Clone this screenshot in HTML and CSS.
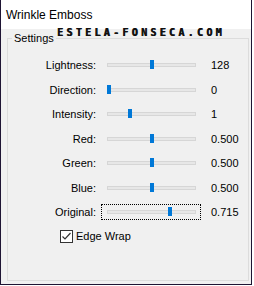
FILE: index.html
```html
<!DOCTYPE html>
<html>

<head>
    <meta charset="UTF-8">
    <title>Wrinkle Emboss</title>
    <link rel="stylesheet" href="styles.css">
</head>

<body>
    <div class="window">
        <div class="titlebar">Wrinkle Emboss</div>

        <div class="watermark">ESTELA-FONSECA.COM</div>

        <div class="group">
            <span class="legend">Settings</span>

            <div class="rows">
                <label>Lightness:</label>
                <div class="slider"><div class="track"><span class="thumb" style="--v:0.502"></span></div></div>
                <span class="value">128</span>

                <label>Direction:</label>
                <div class="slider"><div class="track"><span class="thumb" style="--v:0"></span></div></div>
                <span class="value">0</span>

                <label>Intensity:</label>
                <div class="slider"><div class="track"><span class="thumb" style="--v:0.25"></span></div></div>
                <span class="value">1</span>

                <label>Red:</label>
                <div class="slider"><div class="track"><span class="thumb" style="--v:0.5"></span></div></div>
                <span class="value">0.500</span>

                <label>Green:</label>
                <div class="slider"><div class="track"><span class="thumb" style="--v:0.5"></span></div></div>
                <span class="value">0.500</span>

                <label>Blue:</label>
                <div class="slider"><div class="track"><span class="thumb" style="--v:0.5"></span></div></div>
                <span class="value">0.500</span>

                <label>Original:</label>
                <div class="slider focused"><div class="track"><span class="thumb" style="--v:0.715"></span></div></div>
                <span class="value">0.715</span>
            </div>

            <div class="check">
                <span class="box">
                    <svg width="11" height="11" viewBox="0 0 11 11">
                        <polyline points="1.5,5.5 4,8 9.5,2" fill="none" stroke="#333" stroke-width="1.2"/>
                    </svg>
                </span>
                <span>Edge Wrap</span>
            </div>
        </div>
    </div>
</body>

</html>
```

FILE: styles.css
```css
* {
    box-sizing: border-box;
    margin: 0;
    padding: 0;
}

body {
    width: 254px;
    height: 286px;
    background-color: #fff;
    font-family: "Liberation Sans", Arial, sans-serif;
    font-size: 11px;
    color: #000;
}

.window {
    position: relative;
    width: 252px;
    height: 285px;
    display: flex;
    flex-direction: column;
    background-color: #f0f0f0;
    border: 1px solid #1e1433;
    border-top: none;
}

.titlebar {
    height: 29px;
    flex-shrink: 0;
    background-color: #fff;
    padding-left: 5px;
    font-size: 12px;
    line-height: 30px;
}

.watermark {
    position: absolute;
    left: 56px;
    top: 28px;
    font-family: "DejaVu Sans Mono", monospace;
    font-weight: bold;
    font-size: 10px;
    line-height: 10px;
    letter-spacing: 3.3px;
    color: #111;
    text-shadow: 0.6px 0 0 #111;
}

.group {
    position: relative;
    flex: 1;
    margin: 9px 2px 3px 6px;
    border: 1px solid #dcdcdc;
    padding-top: 14px;
}

.legend {
    position: absolute;
    left: 4px;
    top: -7px;
    padding: 0 2px;
    background-color: #f0f0f0;
    line-height: 12px;
}

.rows {
    display: grid;
    grid-template-columns: 88px 100px auto;
    grid-auto-rows: 24.5px;
    column-gap: 5px;
    align-items: center;
}

.rows label {
    text-align: right;
}

.slider {
    height: 16px;
    display: flex;
    align-items: center;
    padding-left: 6px;
    border: 1px dotted transparent;
}

.slider.focused {
    border-color: #000;
}

.track {
    position: relative;
    width: 89px;
    height: 4px;
    margin-left: -1px;
    background-color: #e7e7e7;
    border: 1px solid #d6d6d6;
}

.thumb {
    position: absolute;
    top: -4px;
    left: calc(var(--v) * 85px - 1px);
    width: 4px;
    height: 9px;
    background-color: #0078d7;
}

.value {
    padding-left: 5px;
}

.check {
    display: flex;
    align-items: center;
    gap: 3px;
    margin: 5px 0 0 52px;
}

.box {
    width: 13px;
    height: 13px;
    border: 1px solid #333;
    background-color: #fff;
}

.box svg {
    display: block;
}
```
